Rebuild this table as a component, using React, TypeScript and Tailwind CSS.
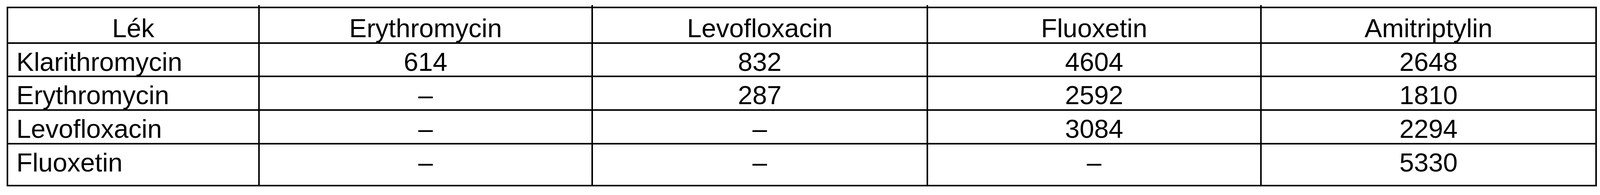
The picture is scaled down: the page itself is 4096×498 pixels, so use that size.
const headers = ["Lék", "Erythromycin", "Levofloxacin", "Fluoxetin", "Amitriptylin"];

const rows: { name: string; values: string[]; h: string }[] = [
  { name: "Klarithromycin", values: ["614", "832", "4604", "2648"], h: "h-[85px]" },
  { name: "Erythromycin", values: ["–", "287", "2592", "1810"], h: "h-[86px]" },
  { name: "Levofloxacin", values: ["–", "–", "3084", "2294"], h: "h-[86px]" },
  { name: "Fluoxetin", values: ["–", "–", "–", "5330"], h: "h-[103px]" },
];

const cols = "grid grid-cols-[644px_853px_858px_854px_854px]";

export default function App() {
  return (
    <div
      className="w-[4096px] h-[498px] bg-white text-black pt-[13px] pl-[17px]"
      style={{ fontFamily: '"Liberation Sans", Arial, Helvetica, sans-serif' }}
    >
      {/* little ticks of the column rules poking above the top border */}
      <div className={`${cols} h-[4px] ml-[4px]`}>
        {headers.map((h, i) => (
          <div key={h} className={i < 4 ? "border-r-4 border-black" : ""} />
        ))}
      </div>

      <div className="w-[4071px] border-4 border-black">
        <div className={cols}>
          {headers.map((h, i) => (
            <div
              key={h}
              className={`h-[91px] border-b-4 border-black pt-[17px] text-center text-[67px] leading-[67px] ${
                i < 4 ? "border-r-4" : ""
              }`}
            >
              {h}
            </div>
          ))}
        </div>

        {rows.map((r, ri) => (
          <div key={r.name} className={cols}>
            <div
              className={`${r.h} border-r-4 border-black pt-[12px] pl-[21px] text-[67px] leading-[67px] ${
                ri < rows.length - 1 ? "border-b-4" : ""
              }`}
            >
              {r.name}
            </div>
            {r.values.map((v, vi) => (
              <div
                key={vi}
                className={`${r.h} border-black pt-[12px] text-center text-[67px] leading-[67px] ${
                  vi < 3 ? "border-r-4" : ""
                } ${ri < rows.length - 1 ? "border-b-4" : ""}`}
              >
                {v}
              </div>
            ))}
          </div>
        ))}
      </div>
    </div>
  );
}
